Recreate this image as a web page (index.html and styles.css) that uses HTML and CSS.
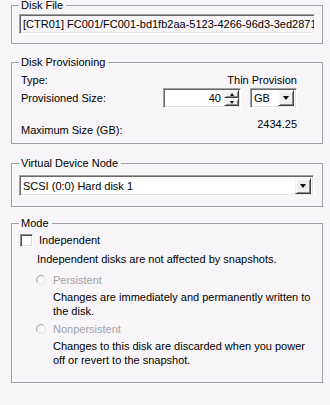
FILE: index.html
```html
<!DOCTYPE html>
<html>
<head>
<meta charset="utf-8">
<link rel="stylesheet" href="styles.css">
</head>
<body>
<div class="page">
  <fieldset class="group g-file">
    <legend>Disk File</legend>
    <div class="field readonly">[CTR01] FC001/FC001-bd1fb2aa-5123-4266-96d3-3ed2871I</div>
  </fieldset>

  <fieldset class="group g-prov">
    <legend>Disk Provisioning</legend>
    <div class="row row-type"><span>Type:</span><span>Thin Provision</span></div>
    <div class="row row-size">
      <span>Provisioned Size:</span>
      <div class="controls">
        <div class="spin sunken">
          <span class="spin-val">40</span>
          <span class="spin-btns">
            <span class="sbtn raised"><span class="tri-up"></span></span>
            <span class="sbtn raised"><span class="tri-down-s"></span></span>
          </span>
        </div>
        <div class="combo combo-unit sunken">
          <span class="combo-text">GB</span>
          <span class="drop raised"><span class="tri-down"></span></span>
        </div>
      </div>
    </div>
    <div class="row row-max"><span class="max-lbl">Maximum Size (GB):</span><span class="max-val">2434.25</span></div>
  </fieldset>

  <fieldset class="group g-node">
    <legend>Virtual Device Node</legend>
    <div class="combo combo-node sunken">
      <span class="combo-text">SCSI (0:0) Hard disk 1</span>
      <span class="drop raised"><span class="tri-down"></span></span>
    </div>
  </fieldset>

  <fieldset class="group g-mode">
    <legend>Mode</legend>
    <div class="check-row"><span class="checkbox"></span><span>Independent</span></div>
    <div class="desc">Independent disks are not affected by snapshots.</div>
    <div class="radio-row r1">
      <svg class="radio" width="12" height="12" viewBox="0 0 12 12">
        <circle cx="6" cy="6" r="4.5" fill="#f7f6f8" stroke="#e4e3e6" stroke-width="1"/>
        <path d="M2.2 8.4 A4.5 4.5 0 0 1 8.4 2.2" fill="none" stroke="#a8a7ab" stroke-width="1"/>
      </svg>
      <span class="disabled">Persistent</span>
    </div>
    <div class="radio-desc">Changes are immediately and permanently written to<br>the disk.</div>
    <div class="radio-row r2">
      <svg class="radio" width="12" height="12" viewBox="0 0 12 12">
        <circle cx="6" cy="6" r="4.5" fill="#f7f6f8" stroke="#e4e3e6" stroke-width="1"/>
        <path d="M2.2 8.4 A4.5 4.5 0 0 1 8.4 2.2" fill="none" stroke="#a8a7ab" stroke-width="1"/>
      </svg>
      <span class="disabled">Nonpersistent</span>
    </div>
    <div class="radio-desc">Changes to this disk are discarded when you power<br>off or revert to the snapshot.</div>
  </fieldset>
</div>
</body>
</html>
```
FILE: styles.css
```css
html, body {
  margin: 0;
  padding: 0;
  background: #f7f5f8;
}
body {
  font-family: "Liberation Sans", Arial, sans-serif;
  font-size: 11px;
  line-height: 14px;
  color: #000;
}
.page {
  display: flex;
  flex-direction: column;
  padding: 0 7px 0 11px;
}
.group {
  margin: 0;
  min-width: 0;
  border: 1px solid #a3a2a6;
  padding: 0 7px 0 7px;
}
.group legend {
  padding: 0 3px 0 2px;
  margin: 0;
  line-height: 11px;
  height: 11px;
  font-size: 11px;
}
.g-file { padding-top: 3px; padding-bottom: 9px; }
.g-prov { margin-top: 13px; padding: 5px 25px 6px 9px; }
.g-prov legend { margin-left: -2px; }
.g-node { margin-top: 14px; padding-top: 6px; padding-bottom: 10px; padding-right: 8px; }
.g-mode { margin-top: 11px; padding-top: 4px; padding-bottom: 15px; }

.sunken {
  box-sizing: border-box;
  border: 1px solid;
  border-color: #a0a0a0 #ffffff #ffffff #a0a0a0;
  box-shadow: inset 1px 1px 0 #696969, inset -1px -1px 0 #e3e3e3;
}
.raised {
  box-sizing: border-box;
  background: #efeef1;
  border: 1px solid;
  border-color: #f3f3f3 #404040 #404040 #f3f3f3;
  box-shadow: inset 1px 1px 0 #ffffff, inset -1px -1px 0 #8a8a8a;
  display: flex;
  align-items: center;
  justify-content: center;
}

.field {
  height: 20px;
  box-sizing: border-box;
  border: 1px solid;
  border-color: #a0a0a0 #ffffff #ffffff #a0a0a0;
  box-shadow: inset 1px 1px 0 #696969, inset -1px -1px 0 #e3e3e3;
  padding: 2px 0 0 3px;
  line-height: 14px;
  white-space: nowrap;
  overflow: hidden;
  background: #f7f5f8;
}

.row {
  display: flex;
  justify-content: space-between;
}
.row-type { height: 14px; }
.row-size { margin-top: 1px; height: 20px; align-items: center; }
.row-max { margin-top: 9px; height: 20px; }
.max-lbl { align-self: flex-end; }
.max-val { align-self: flex-start; }

.controls { display: flex; gap: 9px; height: 20px; }
.spin {
  width: 78px;
  height: 20px;
  background: #fff;
  display: flex;
  align-items: center;
  padding: 2px 1px 2px 2px;
}
.spin-val { flex: 1; text-align: right; padding-right: 3px; }
.spin-btns { display: flex; flex-direction: column; width: 15px; height: 16px; }
.sbtn { height: 8px; width: 15px; }
.tri-up {
  width: 0; height: 0;
  border-left: 2.5px solid transparent;
  border-right: 2.5px solid transparent;
  border-bottom: 3px solid #000;
}
.tri-down-s {
  width: 0; height: 0;
  border-left: 2.5px solid transparent;
  border-right: 2.5px solid transparent;
  border-top: 3px solid #000;
}
.tri-down {
  width: 0; height: 0;
  border-left: 3.5px solid transparent;
  border-right: 3.5px solid transparent;
  border-top: 4px solid #000;
}

.combo {
  height: 20px;
  background: #fff;
  display: flex;
  align-items: center;
  padding: 2px;
}
.combo-text { flex: 1; padding-left: 1px; white-space: nowrap; }
.combo .drop { width: 16px; height: 16px; }
.combo-unit { width: 47px; }
.combo-node { height: 21px; }

.check-row { display: flex; align-items: center; height: 14px; margin-left: 1px; }
.checkbox {
  width: 13px; height: 13px;
  box-sizing: border-box;
  background: #fff;
  border: 1px solid;
  border-color: #8c8c8c #ffffff #ffffff #8c8c8c;
  box-shadow: inset 1px 1px 0 #505050, inset -1px -1px 0 #dcdcdc;
  margin-right: 6px;
}
.desc { margin-top: 5px; margin-left: 18px; white-space: nowrap; }
.radio-row { display: flex; align-items: center; height: 14px; margin-left: 16px; }
.radio { margin-right: 6px; flex: none; }
.r1 { margin-top: 7px; }
.r2 { margin-top: 4px; }
.disabled { color: #a3a2a6; }
.radio-desc { margin-top: 3px; margin-left: 34px; white-space: nowrap; }
```
